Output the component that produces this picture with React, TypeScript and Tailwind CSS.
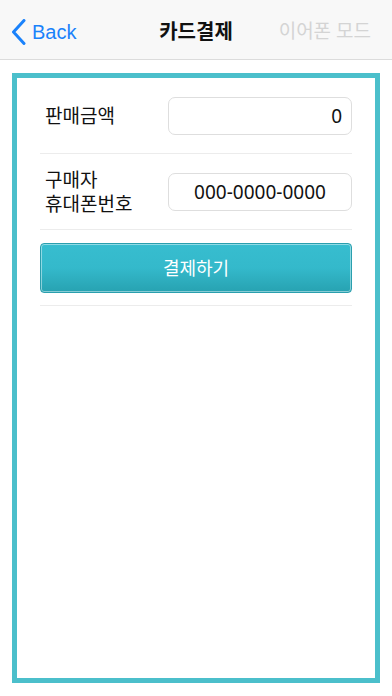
import React, { useState } from 'react';

const font = { fontFamily: '"Noto Sans", "Noto Sans CJK KR", sans-serif' };

const App: React.FC = () => {
  const [amount, setAmount] = useState('0');
  const [phone, setPhone] = useState('');

  return (
    <div className="w-[392px] h-[696px] bg-white flex flex-col" style={font}>
      <header className="h-[60px] shrink-0 bg-[#f8f8f8] border-b border-[#dcdcdc] flex items-center pt-[4px] relative">
        <button className="flex items-center pl-[11px] text-[#1a82fb]">
          <svg width="16" height="26" viewBox="0 0 16 26" fill="none">
            <path d="M13 1.5 L2.5 13 L13 24.5" stroke="#1a82fb" strokeWidth="3" strokeLinecap="round" strokeLinejoin="round" />
          </svg>
          <span className="ml-[5px] text-[20px] leading-none" style={{ fontFamily: '"Liberation Sans", "Noto Sans CJK KR", sans-serif' }}>Back</span>
        </button>
        <h1 className="absolute left-0 right-0 top-[4px] bottom-0 flex items-center justify-center text-[20px] font-bold text-[#111] pointer-events-none">
          카드결제
        </h1>
        <span className="ml-auto pr-[21px] text-[19px] text-[#d4d4d4]">이어폰 모드</span>
      </header>

      <main className="flex-1 px-[12px] pt-[13px] pb-[13px]">
        <div className="h-full border-[5px] border-[#4bbfcb] px-[23px] pt-[19px]">
          <div className="flex items-center pb-[18px] border-b border-[#ececec]">
            <span className="w-[128px] pl-[5px] text-[19px] text-[#111]">판매금액</span>
            <input
              value={amount}
              onChange={(e) => setAmount(e.target.value)}
              className="flex-1 min-w-0 h-[38px] rounded-[7px] border border-[#dedede] bg-white text-right pr-[9px] text-[19px] text-[#111] outline-none"
            />
          </div>

          <div className="flex items-center pt-[14px] pb-[13px] border-b border-[#ececec]">
            <span className="w-[128px] pl-[5px] text-[19px] leading-[24px] text-[#111]">
              구매자
              <br />
              휴대폰번호
            </span>
            <input
              value={phone}
              onChange={(e) => setPhone(e.target.value)}
              placeholder="000-0000-0000"
              className="flex-1 min-w-0 h-[38px] rounded-[7px] border border-[#dedede] bg-white text-center text-[19px] text-[#111] placeholder:text-[#111] outline-none"
            />
          </div>

          <div className="pt-[13px] pb-[12px] border-b border-[#ececec]">
            <button className="w-full h-[50px] rounded-[4px] border border-[#2a9fae] bg-gradient-to-b from-[#37bdcf] via-[#34b9cb] to-[#27a2b1] shadow-[inset_0_0_0_1px_rgba(255,255,255,0.45)] text-white text-[18px]">
              결제하기
            </button>
          </div>
        </div>
      </main>
    </div>
  );
};

export default App;
